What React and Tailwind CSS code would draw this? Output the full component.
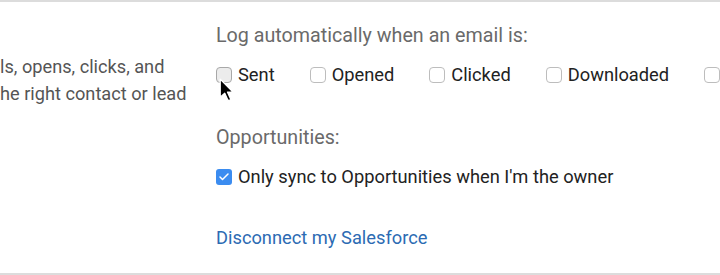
import { Check } from 'lucide-react';

const options = ['Sent', 'Opened', 'Clicked', 'Downloaded'];

function Box({ checked, hover }) {
  if (checked) {
    return (
      <span className="w-4 h-4 rounded-[3px] bg-[#3b8cf0] flex items-center justify-center shrink-0">
        <Check className="w-3 h-3 text-white" strokeWidth={3} />
      </span>
    );
  }
  return (
    <span
      className={`w-4 h-4 rounded-[4px] border shrink-0 ${
        hover ? 'border-[#a8a8a8] bg-[#ececec]' : 'border-[#bdbdbd] bg-white'
      }`}
    />
  );
}

export default function App() {
  return (
    <div
      className="relative w-[720px] h-[275px] bg-white border-t-2 border-b-2 border-[#dcdcdc] overflow-hidden flex"
      style={{ fontFamily: 'Roboto, "Liberation Sans", sans-serif' }}
    >
      {/* Left description, clipped */}
      <div className="w-[216px] shrink-0 pt-[51px] text-[18.2px] leading-[27px] text-[#555] whitespace-nowrap">
        <div>ls, opens, clicks, and</div>
        <div>he right contact or lead</div>
      </div>

      {/* Right settings */}
      <div className="flex-1 pt-[22px] whitespace-nowrap">
        <div className="text-[19.7px] leading-6 text-[#6a6a6a]">Log automatically when an email is:</div>

        <div className="mt-[15px] flex items-center gap-[35px] text-[18.3px] leading-6 text-[#222]">
          {options.map((o, i) => (
            <label key={o} className="flex items-center gap-[6px]">
              <Box hover={i === 0} />
              <span>{o}</span>
            </label>
          ))}
          <Box />
        </div>

        <div className="mt-[39px] text-[19.7px] leading-6 text-[#6a6a6a]">Opportunities:</div>

        <label className="mt-[15px] flex items-center gap-[6px] text-[18.3px] leading-6 text-[#222]">
          <Box checked />
          <span>Only sync to Opportunities when I'm the owner</span>
        </label>

        <div className="mt-[37px] text-[18.3px] leading-6 text-[#2c6bb3]">Disconnect my Salesforce</div>
      </div>

      {/* mouse cursor */}
      <svg className="absolute left-[219px] top-[76px]" width="16" height="25" viewBox="0 0 14 22">
        <path
          d="M1 1 L1 17 L5 13.5 L8 20 L10.5 19 L7.5 12.5 L12.5 12.5 Z"
          fill="#000"
          stroke="#fff"
          strokeWidth="1.2"
          strokeLinejoin="round"
        />
      </svg>
    </div>
  );
}
